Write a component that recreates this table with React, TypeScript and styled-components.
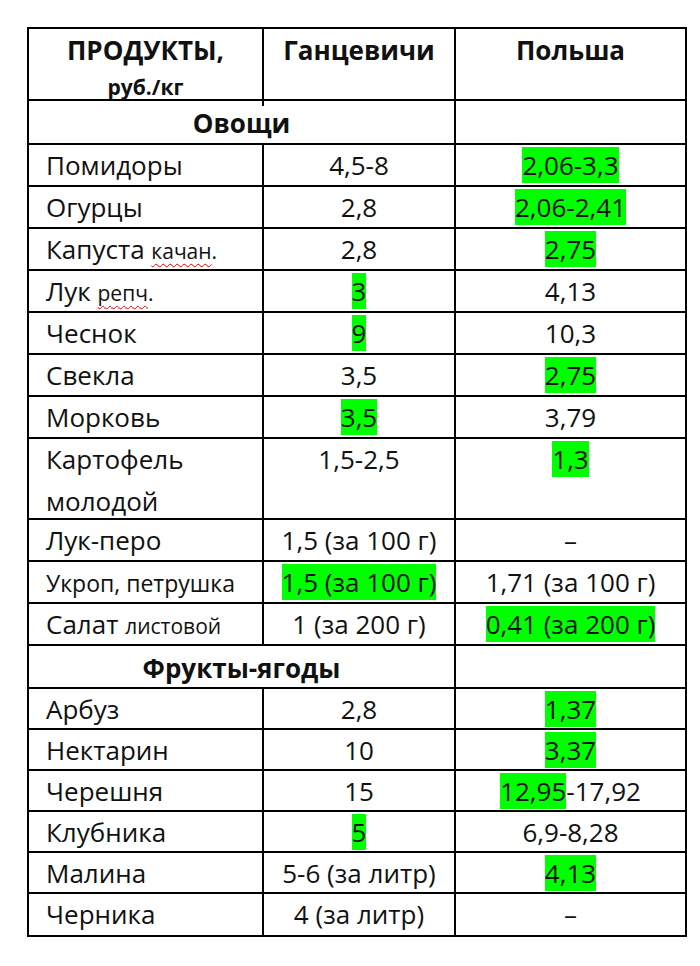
import React from 'react'
import styled, {createGlobalStyle} from 'styled-components'

type Part = string | {hl: string}

interface iRow {
  name: React.ReactNode
  gan: Part[]
  pol: Part[]
  h?: number
}

const Global = createGlobalStyle`
  body {
    margin: 0;
    background: #fff;
  }
`

const Page = styled.div`
  padding: 27px 0 0 27px;
  font-family: "Open Sans", "Noto Sans", sans-serif;
  font-size: 26px;
  color: #111;
`

const Table = styled.div`
  width: 660px;
  box-sizing: border-box;
  border: 2px solid #000;
`

const Row = styled.div<{$h: number}>`
  display: grid;
  grid-template-columns: 235px 192px 229px;
  height: ${p => p.$h}px;
  box-sizing: border-box;
  border-bottom: 2px solid #000;
  &:last-child {
    border-bottom: none;
  }
`

const Cell = styled.div<{$last?: boolean}>`
  box-sizing: border-box;
  border-right: ${p => (p.$last ? 'none' : '2px solid #000')};
  line-height: 36px;
  padding-top: 2px;
  white-space: nowrap;
`

const Head = styled(Cell)`
  font-weight: 700;
  text-align: center;
  padding-top: 3px;
`

const Unit = styled.div`
  font-size: 21px;
  line-height: 38px;
`

const Section = styled(Cell)`
  grid-column: span 2;
  font-weight: 700;
  text-align: center;
  padding-top: 4px;
`

const Name = styled(Cell)`
  padding-left: 17px;
`

const Second = styled.div`
  margin-top: 6px;
`

const Num = styled(Cell)`
  text-align: center;
`

const Mark = styled.span`
  background: #00ff00;
`

const Small = styled.span`
  font-size: 21px;
`

const Greens = styled.span`
  font-size: 23px;
`

const Squiggle = styled.span`
  text-decoration: underline wavy #e00000;
  text-decoration-thickness: 1px;
  text-underline-offset: 4px;
  text-decoration-skip-ink: none;
`

const veg: iRow[] = [
  {name: 'Помидоры', gan: ['4,5-8'], pol: [{hl: '2,06-3,3'}]},
  {name: 'Огурцы', gan: ['2,8'], pol: [{hl: '2,06-2,41'}]},
  {name: <>Капуста <Small><Squiggle>качан</Squiggle>.</Small></>, gan: ['2,8'], pol: [{hl: '2,75'}]},
  {name: <>Лук <Small><Squiggle>репч</Squiggle>.</Small></>, gan: [{hl: '3'}], pol: ['4,13']},
  {name: 'Чеснок', gan: [{hl: '9'}], pol: ['10,3']},
  {name: 'Свекла', gan: ['3,5'], pol: [{hl: '2,75'}]},
  {name: 'Морковь', gan: [{hl: '3,5'}], pol: ['3,79']},
  {name: <>Картофель<Second>молодой</Second></>, gan: ['1,5-2,5'], pol: [{hl: '1,3'}], h: 81},
  {name: 'Лук-перо', gan: ['1,5 (за 100 г)'], pol: ['–']},
  {name: <Greens>Укроп, петрушка</Greens>, gan: [{hl: '1,5 (за 100 г)'}], pol: ['1,71 (за 100 г)']},
  {name: <>Салат <Small>листовой</Small></>, gan: ['1 (за 200 г)'], pol: [{hl: '0,41 (за 200 г)'}]},
]

const fruit: iRow[] = [
  {name: 'Арбуз', gan: ['2,8'], pol: [{hl: '1,37'}]},
  {name: 'Нектарин', gan: ['10'], pol: [{hl: '3,37'}]},
  {name: 'Черешня', gan: ['15'], pol: [{hl: '12,95'}, '-17,92']},
  {name: 'Клубника', gan: [{hl: '5'}], pol: ['6,9-8,28']},
  {name: 'Малина', gan: ['5-6 (за литр)'], pol: [{hl: '4,13'}]},
  {name: 'Черника', gan: ['4 (за литр)'], pol: ['–']},
]

const Value = ({parts}: {parts: Part[]}) => (
  <>
    {parts.map((p, i) =>
      typeof p === 'string' ? <span key={i}>{p}</span> : <Mark key={i}>{p.hl}</Mark>
    )}
  </>
)

const DataRows = ({rows, h}: {rows: iRow[]; h: number}) => (
  <>
    {rows.map((r, i) => (
      <Row key={i} $h={r.h ?? h}>
        <Name>{r.name}</Name>
        <Num>
          <Value parts={r.gan} />
        </Num>
        <Num $last>
          <Value parts={r.pol} />
        </Num>
      </Row>
    ))}
  </>
)

const App = () => {
  return (
    <>
      <Global />
      <Page>
        <Table>
          <Row $h={72}>
            <Head>
              <div>ПРОДУКТЫ,</div>
              <Unit>руб./кг</Unit>
            </Head>
            <Head>Ганцевичи</Head>
            <Head $last>Польша</Head>
          </Row>
          <Row $h={44}>
            <Section>Овощи</Section>
            <Num $last />
          </Row>
          <DataRows rows={veg} h={42} />
          <Row $h={43}>
            <Section>Фрукты-ягоды</Section>
            <Num $last />
          </Row>
          <DataRows rows={fruit} h={41} />
        </Table>
      </Page>
    </>
  )
}

export default App
